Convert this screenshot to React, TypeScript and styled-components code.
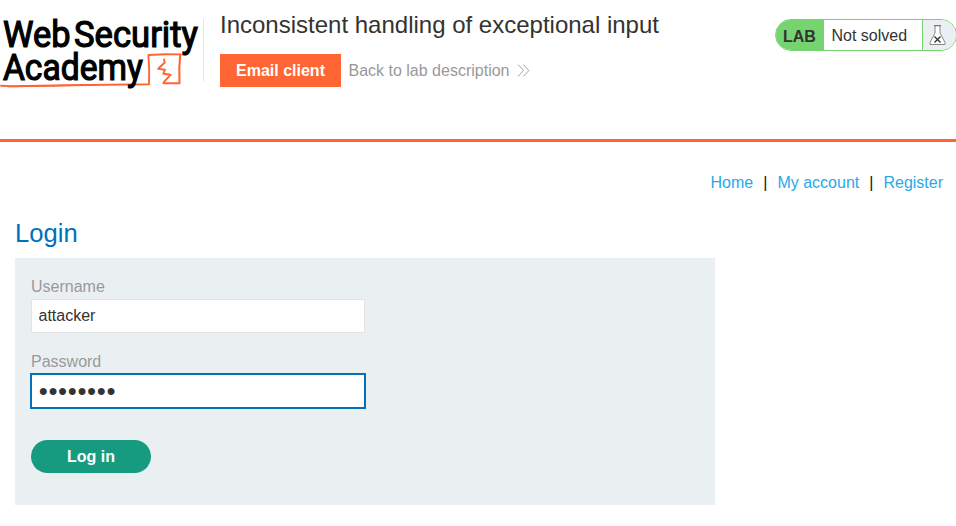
import React from "react";
import styled, { createGlobalStyle } from "styled-components";

const GlobalStyle = createGlobalStyle`
  *, *::before, *::after { box-sizing: border-box; }
  body {
    margin: 0;
    background: #fff;
    color: #333332;
    font: 16px/18px "Liberation Sans", Arial, sans-serif;
    overflow: hidden;
  }
`;

const Header = styled.header`
  display: flex;
  align-items: flex-start;
  height: 142px;
  border-bottom: 3px solid #ff6633;
`;

const Logo = styled.svg`
  display: block;
  flex: none;
  width: 203px;
  height: 100px;
  overflow: visible;
`;

const Titles = styled.div`
  flex: 1;
  margin-top: 19px;
  height: 62px;
  padding-left: 16px;
  border-left: 1px solid #e4e4e4;
`;

const LabTitle = styled.h2`
  margin: -8px 0 15px;
  font-size: 24px;
  line-height: 28px;
  font-weight: 400;
  white-space: nowrap;
`;

const Actions = styled.div`
  display: flex;
  align-items: center;
`;

const EmailButton = styled.a`
  height: 33px;
  width: 121px;
  background: #ff6633;
  color: #fff;
  font-weight: 700;
  line-height: 33px;
  text-align: center;
`;

const BackLink = styled.a`
  display: flex;
  align-items: center;
  margin-left: 7.5px;
  color: #999;
  white-space: nowrap;

  svg { margin-left: 8px; }
`;

const Status = styled.div`
  display: flex;
  flex: none;
  width: 182px;
  height: 32px;
  margin: 19px -1px 0 0;
  border: 1px solid #75d46f;
  border-radius: 16px;
  overflow: hidden;
  line-height: 31px;
`;

const StatusTag = styled.span`
  width: 48px;
  padding-left: 7px;
  background: #75d46f;
  font-weight: 700;
  line-height: 33px;
`;

const StatusText = styled.span`
  width: 99px;
  padding-left: 7.5px;
  border-right: 1px solid #75d46f;
  white-space: nowrap;
`;

const StatusIcon = styled.span`
  flex: 1;
  padding: 5px 0 0 5.5px;
  background: #eaf0f2;

  svg { display: block; }
`;

const Nav = styled.nav`
  display: flex;
  justify-content: flex-end;
  padding: 32px 13px 0 0;
  white-space: pre;
`;

const NavLink = styled.a`
  color: #29a9e6;
`;

const Divider = styled.span`
  width: 24.2px;
  text-align: center;
  color: #111;
`;

const Main = styled.main`
  padding: 26px 15px 0;
`;

const Heading = styled.h1`
  margin: 0 0 10px;
  color: #0071bc;
  font-size: 25.6px;
  line-height: 30px;
  font-weight: 400;
`;

const LoginForm = styled.form`
  display: flex;
  flex-direction: column;
  align-items: flex-start;
  width: 700px;
  height: 247px;
  padding: 20px 16px;
  background: #eaf0f2;
`;

const Label = styled.label`
  height: 21px;
  color: #999;
`;

const Input = styled.input<{ $active?: boolean }>`
  width: 334px;
  height: 34px;
  margin: 0 0 20px;
  padding: 0 6.5px;
  border: 1px solid ${(p) => (p.$active ? "#0071bc" : "#e4e4e4")};
  box-shadow: ${(p) => (p.$active ? "0 0 0 1px #0071bc" : "none")};
  border-radius: 0;
  outline: none;
  background: #fff;
  color: #333332;
  font: inherit;
`;

const SubmitButton = styled.button`
  width: 120px;
  height: 33px;
  margin-top: 12px;
  padding: 0;
  border: 0;
  border-radius: 17px;
  background: #179b80;
  color: #fff;
  font: 700 16px/33px "Liberation Sans", Arial, sans-serif;
`;

const AcademyLogo = () => (
  <Logo viewBox="0 0 203 100" role="img" aria-label="Web Security Academy">
    <g fill="none" stroke="#ff6633" strokeLinejoin="round" strokeLinecap="round">
      <path d="M1 85.8 L12 86.3 L70 85.3 L128 84.5 L149 84.3 L149.2 70 L148.4 55 L165 54.2 L180.6 54.4" strokeWidth="1.9" />
      <path d="M8 86.5 L45 86 L95 84.8" strokeWidth="1.5" />
      <path d="M180.3 54.5 L179.3 68 L179.5 83.2 L163.5 83.2" strokeWidth="2.1" />
      <path d="M164 59.3 L164.8 62.5 L158.2 68.8 L165 69.7 L163.3 73.8 L170.5 74.8 L163.8 82.2" strokeWidth="1.9" />
    </g>
    <g fill="#000" stroke="#000" strokeWidth="1.2" fontFamily="Roboto, sans-serif" fontWeight="400" fontSize="36.5">
      <text x="3" y="46.7" textLength="67.5" lengthAdjust="spacingAndGlyphs">Web</text>
      <text x="74" y="46.7" textLength="124" lengthAdjust="spacingAndGlyphs">Security</text>
      <text x="2.9" y="79.6" textLength="140" lengthAdjust="spacingAndGlyphs">Academy</text>
    </g>
  </Logo>
);

const Chevrons = () => (
  <svg width="13" height="13" viewBox="0 0 13 13" fill="none" stroke="#999" strokeWidth="0.9">
    <path d="M1 .5 L6.5 6.5 L1 12.5 M6.3 .5 L11.8 6.5 L6.3 12.5" />
  </svg>
);

const Flask = () => (
  <svg width="17" height="21" viewBox="0 0 17 21" fill="none">
    <path d="M6 1 V8 L1 17.5 V19.5 H16 V17.5 L11 8 V1" fill="#fff" stroke="#888" strokeWidth="1" />
    <path d="M5 .7 H12" stroke="#777" strokeWidth="1.2" />
    <path d="M5.5 11.5 L11.5 17.5 M11.5 11.5 L5.5 17.5" stroke="#333332" strokeWidth="1.4" />
  </svg>
);

export default function App() {
  return (
    <>
      <GlobalStyle />
      <Header>
        <AcademyLogo />
        <Titles>
          <LabTitle>Inconsistent handling of exceptional input</LabTitle>
          <Actions>
            <EmailButton>Email client</EmailButton>
            <BackLink>
              Back to lab description
              <Chevrons />
            </BackLink>
          </Actions>
        </Titles>
        <Status>
          <StatusTag>LAB</StatusTag>
          <StatusText>Not solved</StatusText>
          <StatusIcon><Flask /></StatusIcon>
        </Status>
      </Header>
      <Nav>
        <NavLink>Home</NavLink>
        <Divider>|</Divider>
        <NavLink>My account</NavLink>
        <Divider>|</Divider>
        <NavLink>Register</NavLink>
      </Nav>
      <Main>
        <Heading>Login</Heading>
        <LoginForm>
          <Label htmlFor="username">Username</Label>
          <Input id="username" defaultValue="attacker" />
          <Label htmlFor="password">Password</Label>
          <Input id="password" defaultValue="●●●●●●●●" $active />
          <SubmitButton type="button">Log in</SubmitButton>
        </LoginForm>
      </Main>
    </>
  );
}
